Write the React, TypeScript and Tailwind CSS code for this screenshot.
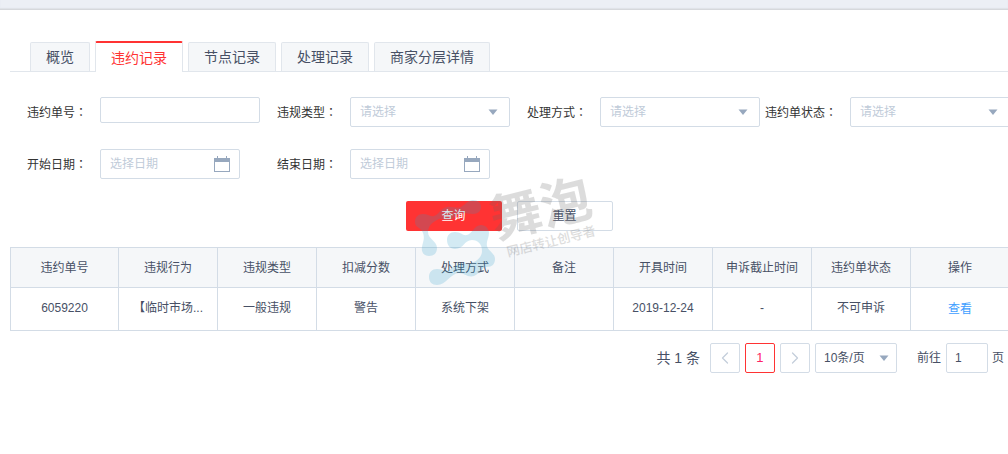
import { useState } from "react";
import { ChevronLeft, ChevronRight } from "lucide-react";

const TABS = ["概览", "违约记录", "节点记录", "处理记录", "商家分层详情"];

const COLUMNS = [
  "违约单号",
  "违规行为",
  "违规类型",
  "扣减分数",
  "处理方式",
  "备注",
  "开具时间",
  "申诉截止时间",
  "违约单状态",
  "操作",
];

const ROWS = [
  ["6059220", "【临时市场...", "一般违规", "警告", "系统下架", "", "2019-12-24", "-", "不可申诉"],
];

function Caret({ tight = false }: { tight?: boolean }) {
  return (
    <svg
      className={
        tight
          ? "absolute right-2 top-3 w-2.5 h-1.5 pointer-events-none"
          : "absolute right-3 top-3 w-2.5 h-1.5 pointer-events-none"
      }
      viewBox="0 0 10 6"
      aria-hidden="true"
    >
      <path d="M0.5 0.5h9L5 6z" fill="#97a8be" />
    </svg>
  );
}

function Field({ id, label, children }: { id: string; label: string; children: React.ReactNode }) {
  return (
    <div className="flex items-start">
      <label
        htmlFor={id}
        className="w-[90px] h-[30px] shrink-0 pr-[13px] text-right leading-[30px] text-[#333] whitespace-nowrap"
      >
        {label}
        <span className="font-['Noto_Sans_CJK_TC',sans-serif]" lang="zh-TW">：</span>
      </label>
      {children}
    </div>
  );
}

function SelectField({ id, label }: { id: string; label: string }) {
  return (
    <Field id={id} label={label}>
      <div className="relative flex-1">
        <select
          id={id}
          className="block w-full h-[30px] appearance-none rounded-xs border border-[#d3dce6] bg-white pl-[9px] text-[#bfcbd9]"
        >
          <option>请选择</option>
        </select>
        <Caret />
      </div>
    </Field>
  );
}

function DateField({ id, label }: { id: string; label: string }) {
  return (
    <Field id={id} label={label}>
      <div className="relative w-[140px]">
        <input
          id={id}
          type="text"
          placeholder="选择日期"
          className="block w-full h-[30px] rounded-xs border border-[#d3dce6] pl-[9px] pr-8 placeholder:text-[#bfcbd9]"
        />
        <svg
          className="absolute right-2.5 top-[7px] w-4 h-4"
          viewBox="0 0 16 16"
          shapeRendering="crispEdges"
          aria-hidden="true"
        >
          <path d="M0 2h3V0h1v2h8V0h1v2h3v14H0zM1 6v9h14V6z" fill="#97a8be" fillRule="evenodd" />
        </svg>
      </div>
    </Field>
  );
}

function Pagination() {
  return (
    <div className="mt-3 pr-[6px] flex items-center justify-end">
      <span className="mr-2.5 text-sm">共 1 条</span>
      <div className="flex gap-[5px]">
        <button
          type="button"
          disabled
          aria-label="上一页"
          className="flex size-[30px] items-center justify-center rounded-xs border border-[#d3dce6] text-[#c4cedb]"
        >
          <ChevronLeft className="size-5 shrink-0" strokeWidth={1.5} />
        </button>
        <button
          type="button"
          aria-current="page"
          className="size-[30px] rounded-xs border border-[#ff3333] text-[13px] text-[#ff2266]"
        >
          1
        </button>
        <button
          type="button"
          disabled
          aria-label="下一页"
          className="flex size-[30px] items-center justify-center rounded-xs border border-[#d3dce6] text-[#c4cedb]"
        >
          <ChevronRight className="size-5 shrink-0" strokeWidth={1.5} />
        </button>
        <div className="relative w-[82px]">
          <select
            aria-label="每页条数"
            className="block w-full h-[30px] appearance-none rounded-xs border border-[#d3dce6] bg-white pl-2"
          >
            <option>10条/页</option>
          </select>
          <Caret tight />
        </div>
      </div>
      <label htmlFor="page" className="ml-5">
        前往
      </label>
      <input
        id="page"
        type="text"
        defaultValue="1"
        className="ml-[5px] mr-1 w-[42px] h-[30px] rounded-xs border border-[#d3dce6] pl-2"
      />
      <span>页</span>
    </div>
  );
}

function Watermark() {
  return (
    <svg
      className="absolute left-[410px] top-[165px] w-[200px] h-[125px] overflow-visible pointer-events-none"
      viewBox="0 0 200 125"
      aria-hidden="true"
    >
      <g fill="#2b9cc8" opacity="0.2">
        <path d="M5 57C5 52 8 49 13 49C18 49 20 52 24 51C29 50 30 43 37 42C43 41 46 44 51 42C56 39 58 35 63 35C68 35 71 38 71 42C71 46 68 49 63 49C57 49 54 47 49 49C45 51 43 55 38 55C33 55 31 52 27 55C21 58 18 62 18 67C18 74 27 76 27 83C27 88 24 91 19 91C14 91 11 87 12 82C13 76 15 74 13 68C11 62 5 63 5 57Z" />
        <path d="M37 75C37 70 40 67 45 67C51 67 53 71 57 70C62 69 64 60 71 60C76 60 79 64 79 68C79 73 76 76 77 81C78 86 85 88 85 94C85 99 82 102 77 102C72 102 71 108 64 111C58 113 54 108 49 108C41 108 36 120 27 120C22 120 19 117 19 112C19 107 22 104 27 104C32 104 34 107 39 105C45 102 46 98 53 98C57 98 59 100 62 98C67 96 72 92 72 86C72 79 68 75 62 75C54 75 54 84 45 84C40 84 37 80 37 75Z" />
      </g>
      <g
        fill="#666"
        opacity="0.22"
        textAnchor="middle"
        fontFamily="'Noto Sans CJK SC', sans-serif"
      >
        <text transform="translate(131 44) rotate(-14)" y="18" fontSize="51" fontWeight="700">
          舞泡
        </text>
        <text transform="translate(141 76) rotate(-14)" y="5" fontSize="13" fontWeight="500">
          网店转让创导者
        </text>
      </g>
    </svg>
  );
}

export default function App() {
  const [tab, setTab] = useState(1);

  return (
    <div className="relative overflow-x-clip bg-white font-['Liberation_Sans','Noto_Sans_CJK_SC',sans-serif] text-xs text-[#475065]">
      <div className="h-2.5 border-b border-[#d6d8dc] bg-[#eceff5] shadow-[inset_0_-1px_1px_#dfe2e7]" />

      <main className="pl-2.5 -mr-0.5 pt-[31px]">
        <nav className="flex items-end gap-[5px] border-b border-[#e1e6ec] pl-5">
          {TABS.map((name, i) => (
            <button
              key={name}
              type="button"
              onClick={() => setTab(i)}
              className={
                i === tab
                  ? "h-[31px] -mb-px px-[15px] text-sm text-[#ff3333] bg-white border-x border-[#e1e6ec] border-t-2 border-t-[#ff3333] rounded-t-xs"
                  : "h-[29px] px-[15px] text-sm bg-[#f5f7f9] border border-b-0 border-[#e1e6ec] rounded-t-xs"
              }
            >
              {name}
            </button>
          ))}
        </nav>

        <form className="pt-[25px]" onSubmit={(e) => e.preventDefault()}>
          <div className="grid grid-cols-4 gap-y-[22px]">
            <Field id="order" label="违约单号">
              <input
                id="order"
                type="text"
                className="block flex-1 min-w-0 h-[26px] rounded-xs border border-[#d3dce6] px-2.5"
              />
            </Field>
            <SelectField id="kind" label="违规类型" />
            <SelectField id="handling" label="处理方式" />
            <SelectField id="status" label="违约单状态" />
            <DateField id="start" label="开始日期" />
            <DateField id="end" label="结束日期" />
          </div>
          <div className="mt-[22px] pr-0.5 flex justify-center gap-[15px]">
            <button type="submit" className="w-24 h-[30px] rounded-xs bg-[#ff3333] text-white">
              查询
            </button>
            <button type="reset" className="w-24 h-[30px] rounded-xs border border-[#d3dce6] bg-white">
              重置
            </button>
          </div>
        </form>

        <table className="mt-4 w-full table-fixed border-collapse text-center">
          <thead>
            <tr className="h-10 bg-[#f5f7f9]">
              {COLUMNS.map((name, i) => (
                <th
                  key={name}
                  className={
                    i === 0
                      ? "w-[108px] border border-[#d3dce6] font-normal"
                      : "border border-[#d3dce6] font-normal"
                  }
                >
                  {name}
                </th>
              ))}
            </tr>
          </thead>
          <tbody>
            {ROWS.map((row) => (
              <tr key={row[0]} className="h-[43px]">
                {row.map((cell, i) => (
                  <td key={i} className="border border-[#d3dce6] pb-0.5 whitespace-nowrap">
                    {cell}
                  </td>
                ))}
                <td className="border border-[#d3dce6]">
                  <a href="#view" className="text-[#409eff]">
                    查看
                  </a>
                </td>
              </tr>
            ))}
          </tbody>
        </table>

        <Pagination />
      </main>

      <Watermark />
    </div>
  );
}
